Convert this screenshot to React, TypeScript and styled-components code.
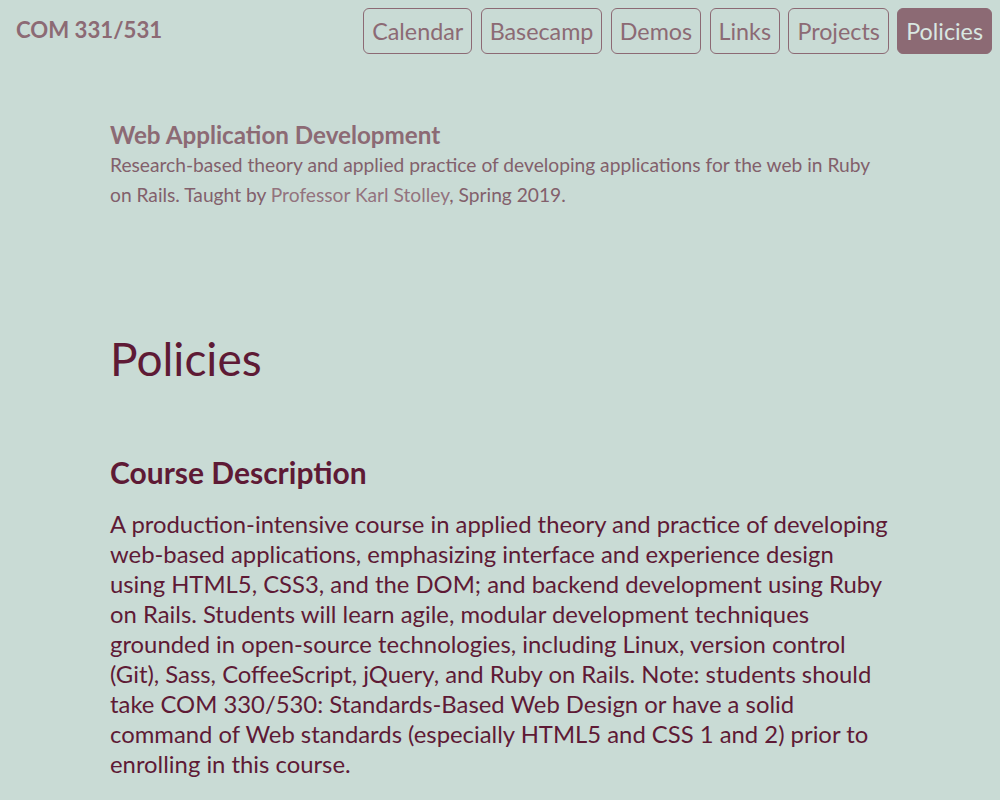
import * as React from "react";
import styled, { createGlobalStyle } from "styled-components";

const GlobalStyle = createGlobalStyle`
  html, body {
    margin: 0;
    padding: 0;
    background: #c9dbd5;
  }
  body {
    font-family: Lato, "Open Sans", sans-serif;
    color: #5e1a35;
  }
`;

const Header = styled.header`
  display: flex;
  justify-content: space-between;
  align-items: flex-start;
  padding: 8px 8px 0 16px;
`;

const Logo = styled.a`
  font-size: 22.2px;
  font-weight: 700;
  color: #8c6a74;
  text-decoration: none;
  margin-top: 8px;
`;

const Nav = styled.nav`
  display: flex;
  gap: 8.4px;
`;

const NavButton = styled.a<{ $active?: boolean }>`
  box-sizing: border-box;
  display: flex;
  align-items: center;
  height: 46px;
  padding: 0 8px;
  border: 1px solid #8c6a74;
  border-radius: 6px;
  font-size: 23.3px;
  color: ${(p) => (p.$active ? "#d9e7e2" : "#8c6a74")};
  background: ${(p) => (p.$active ? "#8c6a74" : "transparent")};
  text-decoration: none;
`;

const Main = styled.main`
  width: 780px;
  margin: 0 auto;
`;

const Intro = styled.section`
  margin-top: 66px;
  color: #82606b;
  h2 {
    margin: 0;
    font-size: 24.2px;
    font-weight: 700;
    line-height: 30px;
    color: #8c6a74;
  }
  p {
    margin: 0;
    font-size: 19.2px;
    line-height: 30px;
  }
  a {
    color: #93737e;
    text-decoration: none;
  }
`;

const PageTitle = styled.h1`
  margin: 121px 0 0;
  font-size: 46px;
  font-weight: 400;
  line-height: 56px;
`;

const SectionTitle = styled.h2`
  margin: 67px 0 0;
  font-size: 30px;
  font-weight: 700;
  line-height: 36px;
`;

const Body = styled.p`
  margin: 19px 0 0;
  font-size: 23.85px;
  line-height: 30px;
`;

const links = ["Calendar", "Basecamp", "Demos", "Links", "Projects", "Policies"];

const App: React.FC = () => {
  return (
    <>
      <GlobalStyle />
      <Header>
        <Logo href="#">COM 331/531</Logo>
        <Nav>
          {links.map((l) => (
            <NavButton key={l} href="#" $active={l === "Policies"}>
              {l}
            </NavButton>
          ))}
        </Nav>
      </Header>
      <Main>
        <Intro>
          <h2>Web Application Development</h2>
          <p>
            Research-based theory and applied practice of developing
            applications for the web in Ruby on Rails. Taught by{" "}
            <a href="#">Professor Karl Stolley</a>, Spring 2019.
          </p>
        </Intro>
        <PageTitle>Policies</PageTitle>
        <SectionTitle>Course Description</SectionTitle>
        <Body>
          A production-intensive course in applied theory and practice of
          developing web-based applications, emphasizing interface and
          experience design using HTML5, CSS3, and the DOM; and backend
          development using Ruby on Rails. Students will learn agile, modular
          development techniques grounded in open-source technologies,
          including Linux, version control (Git), Sass, CoffeeScript, jQuery,
          and Ruby on Rails. Note: students should take COM 330/530:
          Standards-Based Web Design or have a solid command of Web standards
          (especially HTML5 and CSS 1 and 2) prior to enrolling in this course.
        </Body>
      </Main>
    </>
  );
};

export default App;
